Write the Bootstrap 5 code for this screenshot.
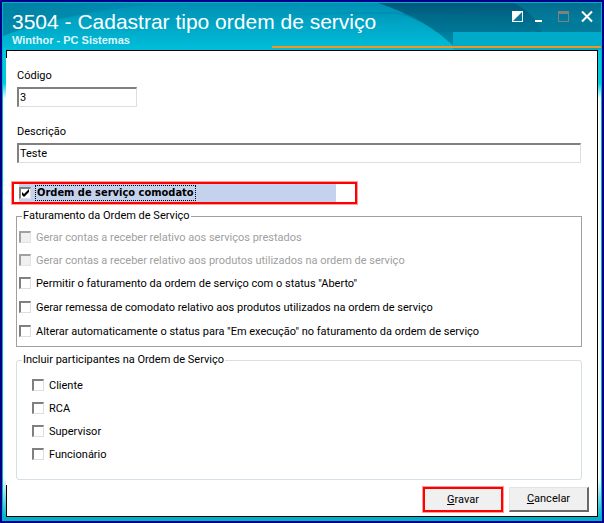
<!DOCTYPE html>
<html lang="pt-BR">
<head>
<meta charset="utf-8">
<meta name="viewport" content="width=device-width, initial-scale=1">
<title>3504 - Cadastrar tipo ordem de serviço</title>
<link href="https://cdn.jsdelivr.net/npm/bootstrap@5.3.0/dist/css/bootstrap.min.css" rel="stylesheet">
<style>
  body { font: 11px/14px Tahoma, Roboto, sans-serif; color: #000; background: #00008b; }
  .app-window { border: 2px solid #00008b; background: #00008b; }
  .app-frame {
    border: 1px solid #00afc8; border-width: 1px 1px 4px;
    background: linear-gradient(#00cbdc 80px, #fff 96px, #fff calc(100% - 40px), #00b4cc);
  }
  .title-bar { height: 47px; padding: 7px 8px 0 9px; color: #fff; }
  .title-art { z-index: 0; }
  .title-bar h1 { font: 21px/23px "Liberation Sans", Arial, sans-serif; }
  .title-bar p { font: bold 11px/14px "Liberation Sans", Arial, sans-serif; color: #dcf6fb; }
  .win-controls { gap: 11px; padding-top: 1px; }
  .win-btn { width: 12px; height: 12px; background: none; line-height: 0; }
  .panel-body {
    margin: 0 3px; padding: 17px 8px 4px 10px;
    border: 1px solid #000; border-left: 0;
    background: linear-gradient(#000, #000) left bottom / 1px 31px no-repeat, linear-gradient(#000, #000) left top / 1px 7px no-repeat #fff;
  }
  .fields { padding: 0 8px 0 1px; }
  .fields label { padding-top: 1px; margin-bottom: 4px; }
  .code-row { margin-bottom: 17px; }
  .sunken {
    height: 20px; padding: 0 1px; border: 1px solid; border-width: 2px 1px 1px 2px;
    border-color: #808080 #dedede #dedede #808080; border-radius: 0; background: #fff;
    font: inherit; color: #000;
  }
  .code-input { width: 120px; }
  .tick {
    appearance: none; width: 12px; height: 12px; margin: 0; flex: none; background: #fff;
    border: 1px solid; border-width: 2px 1px 1px 2px; border-color: #808080 #dedede #dedede #808080;
  }
  .tick:checked {
    background: #fff url("data:image/svg+xml,%3Csvg xmlns='http://www.w3.org/2000/svg' viewBox='0 0 9 9'%3E%3Cpath d='M1 3v3l2 2 5-5V0L3 5z'/%3E%3C/svg%3E") center / 9px 9px no-repeat;
  }
  .tick:disabled { background: #f0f0f0; border-color: #a0a0a0 #e3e3e3 #e3e3e3 #a0a0a0; }
  .tick:disabled + label { color: #a0a0a0; }
  .opt { height: 24px; gap: 5px; }
  .opt label { padding-top: 2px; }
  .opt-short { height: 23px; }
  .callout { border: 2px solid #f00; box-shadow: 0 0 0 1px #ff9c9c; }
  .key-option { width: 345px; max-width: 100%; height: 22px; margin: 19px 0 5px -4px; padding: 0 19px 0 5px; }
  .key-option .fill { height: 18px; gap: 5px; background: #c5d2ee; font-family: Tahoma, "DejaVu Sans Condensed", sans-serif; font-weight: bold; }
  .key-option label { outline: 1px dotted #000; padding: 0 1px; }
  .group { border: 1px solid #a0a0a0; margin: 0 7px 0 0; padding: 2px 2px 3px; }
  .group legend { font-size: 11px; line-height: 14px; margin-left: 3px; padding: 0 1px; }
  .group-soft { border-color: #d5dfe5; border-radius: 3px; margin-top: 6px; padding: 6px 15px 14px; }
  .group-soft legend { margin-left: -10px; }
  .actions { gap: 6px; margin-top: 4px; }
  .act {
    width: 80px; height: 25px; background: #f0f0f0; font: inherit; color: #000;
    border: 1px solid; border-width: 1px 2px 2px 1px; border-color: #e3e3e3 #696969 #696969 #e3e3e3;
  }
  .act-key { border: 2px solid #f00; box-shadow: 0 0 0 1px #ff9c9c; }
</style>
<script src="https://cdn.jsdelivr.net/npm/bootstrap@5.3.0/dist/js/bootstrap.bundle.min.js"></script>
</head>
<body>
<main class="app-window min-vh-100 d-flex flex-column">
  <div class="app-frame flex-grow-1 d-flex flex-column">
    <header class="title-bar position-relative d-flex justify-content-between align-items-start">
      <svg class="title-art position-absolute top-0 start-0 w-100 h-100" viewBox="3 3 598 47" preserveAspectRatio="none" aria-hidden="true">
        <defs>
          <linearGradient id="sky" x1="0" y1="0" x2="0" y2="1"><stop offset="0" stop-color="#008fb3"/><stop offset="1" stop-color="#00bfda"/></linearGradient>
          <linearGradient id="deep" x1="0" y1="0" x2="0" y2="1"><stop offset="0" stop-color="#00587a"/><stop offset="1" stop-color="#0092b0"/></linearGradient>
          <linearGradient id="shade" x1="0" y1="0" x2="1" y2="0"><stop offset="0" stop-color="#007397" stop-opacity=".6"/><stop offset="1" stop-color="#006f92" stop-opacity=".1"/></linearGradient>
        </defs>
        <path fill="url(#sky)" d="M3 3h598v47H3z"/>
        <path fill="url(#shade)" d="M3 3h160Q60 14 3 36z"/>
        <path fill="#0080a4" fill-opacity=".35" d="M60 43Q180 15 330 14t271 12V18Q440 8 300 14T60 43z"/>
        <path fill="url(#deep)" d="M378 3h223v47H457Q430 20 378 3z"/>
        <path fill="#0aa0bd" fill-opacity=".3" d="M514 3h87v29h-59Q533 12 514 3z"/>
        <path fill="#006c8c" fill-opacity=".3" d="M400 14q90 0 201 10v8H436q-14-11-36-18z"/>
        <path fill="#00abca" d="M453 32h148v18H453z"/>
        <path fill="#f7941d" d="M272 46h329v2H272z"/>
      </svg>
      <div class="position-relative">
        <h1 class="m-0">3504 - Cadastrar tipo ordem de serviço</h1>
        <p class="m-0">Winthor - PC Sistemas</p>
      </div>
      <div class="win-controls position-relative d-flex">
        <button type="button" class="win-btn border-0 p-0" aria-label="Recolher"><svg width="12" height="12"><path fill="#fff" d="M0 0h11v11H0z"/><path fill="#007796" d="M10 1v9H1z"/></svg></button>
        <button type="button" class="win-btn border-0 p-0" aria-label="Minimizar"><svg width="12" height="12"><path fill="#fff" d="M0 9h7v2H0z"/></svg></button>
        <button type="button" class="win-btn border-0 p-0" aria-label="Maximizar" disabled><svg width="12" height="12"><path fill="#808080" fill-rule="evenodd" d="M0 0h11v11H0zM1 3v7h9V3z"/></svg></button>
        <button type="button" class="win-btn border-0 p-0" aria-label="Fechar"><svg width="12" height="12"><path stroke="#fff" stroke-width="2" d="M1 .5l10 10M11 .5l-10 10"/></svg></button>
      </div>
    </header>

    <form class="panel-body flex-grow-1 d-flex flex-column">
      <div class="fields">
        <div class="code-row d-flex flex-column align-items-start">
          <label for="codigo">Código</label>
          <input id="codigo" class="sunken code-input" type="text" value="3">
        </div>
        <div class="d-flex flex-column">
          <label class="align-self-start" for="descricao">Descrição</label>
          <input id="descricao" class="sunken w-100" type="text" value="Teste">
        </div>
      </div>

      <div class="key-option callout">
        <div class="fill d-flex align-items-center">
          <input id="comodato" class="tick" type="checkbox" checked>
          <label for="comodato">Ordem de serviço comodato</label>
        </div>
      </div>

      <fieldset class="group">
        <legend class="float-none w-auto mb-0">Faturamento da Ordem de Serviço</legend>
        <div class="opt opt-short d-flex align-items-center"><input id="f1" class="tick" type="checkbox" disabled><label for="f1">Gerar contas a receber relativo aos serviços prestados</label></div>
        <div class="opt opt-short d-flex align-items-center"><input id="f2" class="tick" type="checkbox" disabled><label for="f2">Gerar contas a receber relativo aos produtos utilizados na ordem de serviço</label></div>
        <div class="opt d-flex align-items-center"><input id="f3" class="tick" type="checkbox"><label for="f3">Permitir o faturamento da ordem de serviço com o status "Aberto"</label></div>
        <div class="opt d-flex align-items-center"><input id="f4" class="tick" type="checkbox"><label for="f4">Gerar remessa de comodato relativo aos produtos utilizados na ordem de serviço</label></div>
        <div class="opt d-flex align-items-center"><input id="f5" class="tick" type="checkbox"><label for="f5">Alterar automaticamente o status para "Em execução" no faturamento da ordem de serviço</label></div>
      </fieldset>

      <fieldset class="group group-soft">
        <legend class="float-none w-auto mb-0">Incluir participantes na Ordem de Serviço</legend>
        <div class="opt opt-short d-flex align-items-center"><input id="p1" class="tick" type="checkbox"><label for="p1">Cliente</label></div>
        <div class="opt opt-short d-flex align-items-center"><input id="p2" class="tick" type="checkbox"><label for="p2">RCA</label></div>
        <div class="opt opt-short d-flex align-items-center"><input id="p3" class="tick" type="checkbox"><label for="p3">Supervisor</label></div>
        <div class="opt opt-short d-flex align-items-center"><input id="p4" class="tick" type="checkbox"><label for="p4">Funcionário</label></div>
      </fieldset>

      <div class="actions d-flex justify-content-end mt-auto">
        <button type="submit" class="act act-key"><u>G</u>ravar</button>
        <button type="button" class="act"><u>C</u>ancelar</button>
      </div>
    </form>
  </div>
</main>
</body>
</html>
